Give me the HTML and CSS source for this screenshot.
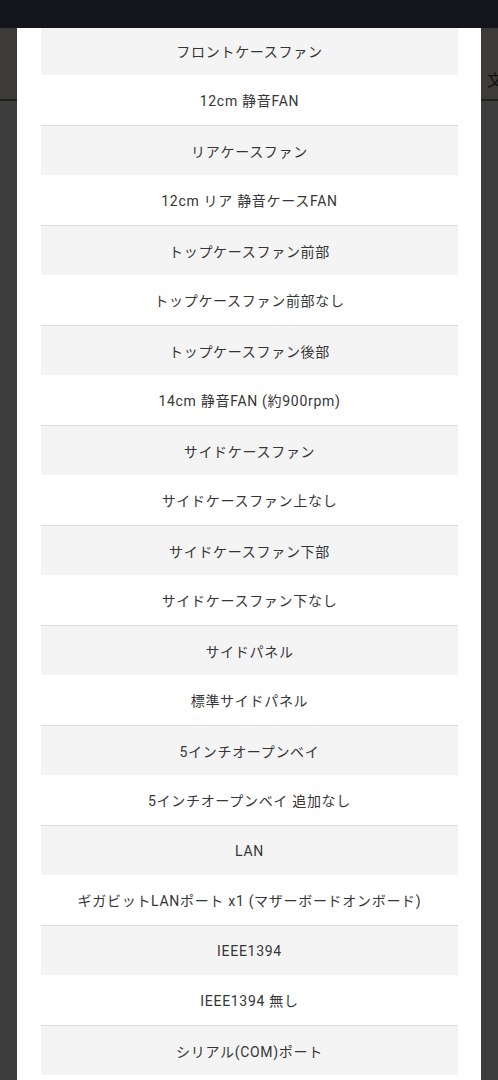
FILE: index.html
```html
<!DOCTYPE html>
<html lang="ja">
<head>
    <meta charset="UTF-8">
    <meta name="viewport" content="width=device-width, initial-scale=1.0">
    <title>カスタマイズ</title>
    <link rel="stylesheet" href="styles.css">
</head>
<body>
    <div class="status-bar"></div>

    <!-- Page behind the modal -->
    <div class="page">
        <header class="page-header">
            <span class="header-icon">文</span>
        </header>
        <div class="page-body"></div>
    </div>

    <div class="overlay"></div>

    <div class="modal">
        <div class="spec-list">
            <div class="spec-title">フロントケースファン</div>
            <div class="spec-value">12cm 静音FAN</div>
            <div class="spec-title">リアケースファン</div>
            <div class="spec-value">12cm リア 静音ケースFAN</div>
            <div class="spec-title">トップケースファン前部</div>
            <div class="spec-value">トップケースファン前部なし</div>
            <div class="spec-title">トップケースファン後部</div>
            <div class="spec-value">14cm 静音FAN (約900rpm)</div>
            <div class="spec-title">サイドケースファン</div>
            <div class="spec-value">サイドケースファン上なし</div>
            <div class="spec-title">サイドケースファン下部</div>
            <div class="spec-value">サイドケースファン下なし</div>
            <div class="spec-title">サイドパネル</div>
            <div class="spec-value">標準サイドパネル</div>
            <div class="spec-title">5インチオープンベイ</div>
            <div class="spec-value">5インチオープンベイ 追加なし</div>
            <div class="spec-title">LAN</div>
            <div class="spec-value">ギガビットLANポート x1 (マザーボードオンボード)</div>
            <div class="spec-title">IEEE1394</div>
            <div class="spec-value">IEEE1394 無し</div>
            <div class="spec-title">シリアル(COM)ポート</div>
            <div class="spec-value"></div>
        </div>
    </div>
</body>
</html>
```

FILE: styles.css
```css
:root {
    --bar-dark: #15161d;
    --backdrop: #3d3d3d;
    --row-grey: #f4f4f4;
    --row-line: #dcdcdc;
    --text: #363636;
}

html, body {
    height: 100%;
}

body {
    margin: 0;
    font-family: Roboto, "Noto Sans CJK JP", sans-serif;
    background: var(--backdrop);
    overflow: hidden;
}

.status-bar {
    position: fixed;
    top: 0;
    left: 0;
    right: 0;
    height: 28px;
    background: var(--bar-dark);
    z-index: 30;
}

.page {
    padding-top: 28px;
}

.page-header {
    height: 73px;
    background: #fff6ea;
    border-bottom: 2px solid #8a8a8a;
    display: flex;
    justify-content: flex-end;
    align-items: flex-end;
    padding-bottom: 8px;
    box-sizing: border-box;
}

.header-icon {
    font-family: "Noto Sans CJK JP", sans-serif;
    font-size: 16px;
    color: #4a4a4a;
    margin-right: -5px;
}

.page-body {
    height: 1000px;
    background: #ffffff;
}

.overlay {
    position: fixed;
    inset: 0;
    background: rgba(0, 0, 0, 0.76);
    z-index: 10;
}

.modal {
    position: fixed;
    top: 0;
    bottom: 0;
    left: 17px;
    right: 17px;
    background: #ffffff;
    z-index: 20;
    overflow: hidden;
}

.spec-list {
    padding: 25px 23px 0 24px;
}

.spec-title,
.spec-value {
    height: 50px;
    display: flex;
    align-items: center;
    justify-content: center;
    font-size: 14px;
    letter-spacing: 0.05em;
    color: var(--text);
}

.spec-title {
    background: var(--row-grey);
    border-top: 1px solid var(--row-line);
    height: 49px;
}
```
